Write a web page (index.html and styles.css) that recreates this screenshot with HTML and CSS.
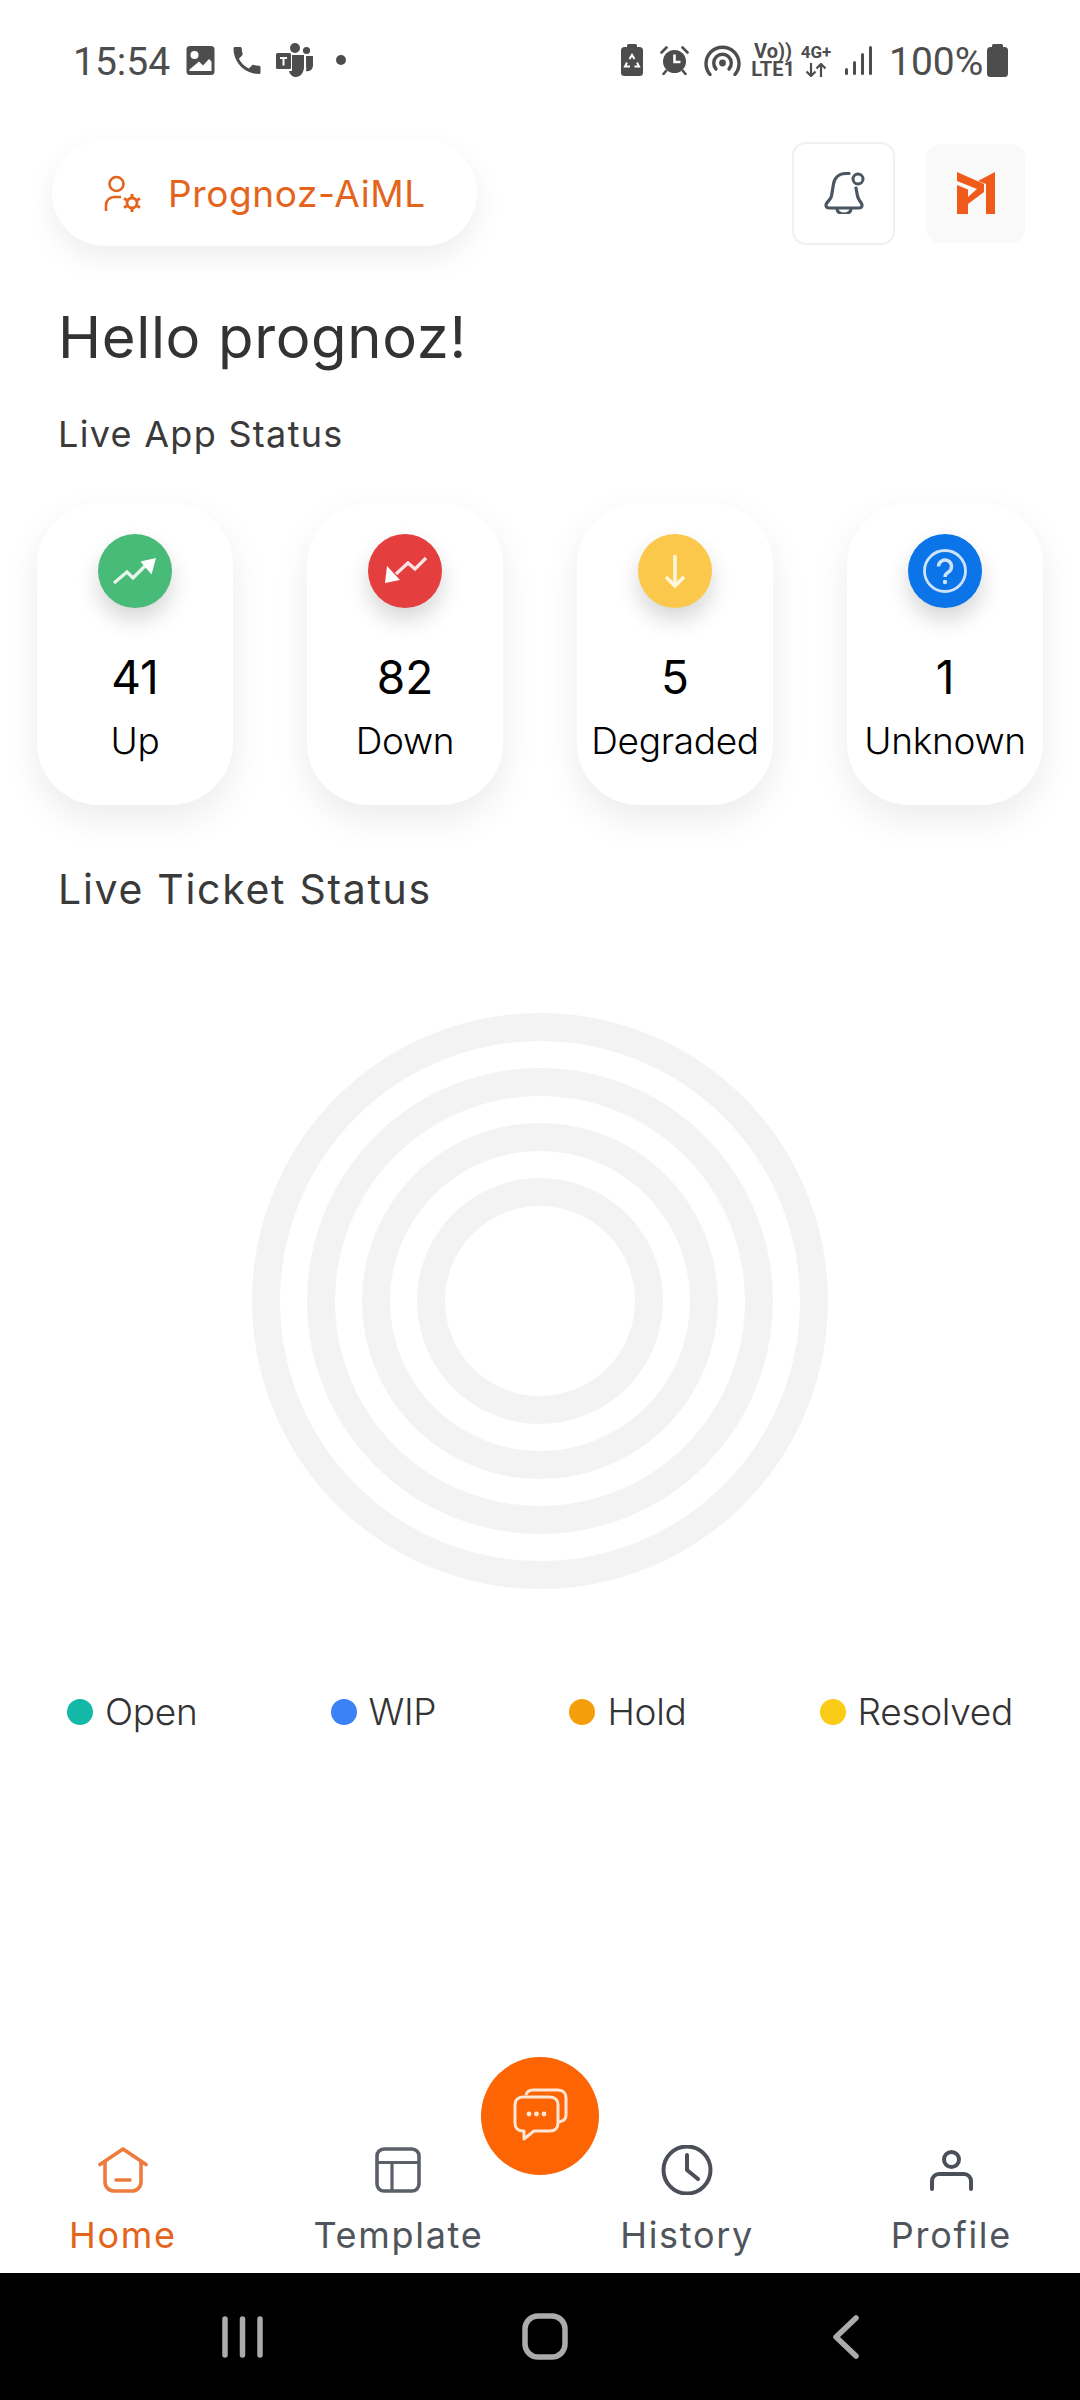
FILE: index.html
```html
<!DOCTYPE html>
<html lang="en">
  <head>
    <meta charset="UTF-8" />
    <meta name="viewport" content="width=device-width, initial-scale=1.0" />
    <title>Prognoz-AiML</title>
    <link rel="stylesheet" href="styles.css">
  </head>
  <body>
    <div class="app">
      <!-- Android status bar -->
      <div class="status">
        <div class="status-group">
          <span class="status-time">15:54</span>
          <svg class="ic-image" width="29" height="29" viewBox="0 0 29 29">
            <rect x="0.5" y="0" width="28" height="29" rx="3.5" fill="#4d4d4d" />
            <circle cx="8.5" cy="9" r="4" fill="#fff" />
            <path d="M3.5 25V23.5L13 15.5L17 19.5L23 13L25.5 15.5V25Z" fill="#fff" />
          </svg>
          <svg class="ic-phone" width="28" height="27" viewBox="3 3 18 18">
            <path fill="#4d4d4d" d="M20 15.5c-1.25 0-2.45-.2-3.57-.57-.35-.11-.74-.03-1.02.24l-2.2 2.2c-2.83-1.44-5.15-3.75-6.59-6.59l2.2-2.21c.28-.26.36-.65.25-1-.37-1.12-.57-2.32-.57-3.57 0-.55-.45-1-1-1H4c-.55 0-1 .45-1 1 0 9.39 7.61 17 17 17 .55 0 1-.45 1-1v-3.5c0-.55-.45-1-1-1z" />
          </svg>
          <svg class="ic-teams" width="38" height="34" viewBox="0 0 38 34">
            <circle cx="20" cy="5" r="5" fill="#4d4d4d" />
            <circle cx="31.5" cy="7.5" r="3.6" fill="#4d4d4d" />
            <path d="M17 12H29V24C29 30 25 34 21 34C18 34 15 32 14 28H17Z" fill="#4d4d4d" />
            <path d="M31 13H38V22C38 26 35 29 31 28C31.5 26 31 24 31 22Z" fill="#4d4d4d" />
            <rect x="1" y="10" width="15" height="16" rx="1.5" fill="#4d4d4d" />
            <path d="M5 14H12V16H9.5V22.5H7.5V16H5Z" fill="#fff" />
          </svg>
          <span class="status-dot"></span>
        </div>
        <div class="status-group">
          <svg class="ic-recycle" width="22" height="32" viewBox="0 0 22 32">
            <rect x="6" y="0" width="10" height="6" rx="1.5" fill="#4d4d4d" />
            <rect x="0" y="3" width="22" height="29" rx="3.5" fill="#4d4d4d" />
            <path d="M8.5 15L11 11L13.5 15M16 18.5L18 22.5H13.5M9 22.5H4L6 18.5" fill="none" stroke="#fff" stroke-width="2" />
          </svg>
          <svg class="ic-alarm" width="29" height="29" viewBox="0 0 29 29">
            <circle cx="14.5" cy="15.5" r="11.5" fill="#4d4d4d" />
            <path d="M14.5 8.5V16H20.5" fill="none" stroke="#fff" stroke-width="2.6" />
            <path d="M1.5 6.5L6.5 1.5M22.5 1.5L27.5 6.5M6 25L3.5 28M23 25L25.5 28" fill="none" stroke="#4d4d4d" stroke-width="2.6" stroke-linecap="round" />
          </svg>
          <svg class="ic-hotspot" width="37" height="31" viewBox="0 0 37 31">
            <path d="M6 29.5A16.5 16.5 0 1 1 31 29.5" fill="none" stroke="#4d4d4d" stroke-width="3.4" stroke-linecap="round" />
            <path d="M12 24A8.8 8.8 0 1 1 25 24" fill="none" stroke="#4d4d4d" stroke-width="3.4" stroke-linecap="round" />
            <circle cx="18.5" cy="18" r="3.4" fill="#4d4d4d" />
          </svg>
          <div class="ic-volte">
            <span>Vo))</span>
            <span>LTE1</span>
          </div>
          <div class="ic-net">
            <span>4G+</span>
            <svg width="22" height="14" viewBox="0 0 22 14">
              <path d="M6 0V13M1.5 8.5L6 13L10.5 8.5M16 14V1M11.5 5.5L16 1L20.5 5.5" fill="none" stroke="#4d4d4d" stroke-width="2.2" />
            </svg>
          </div>
          <svg class="ic-signal" width="27" height="29" viewBox="0 0 27 29">
            <rect x="0" y="22" width="3" height="7" rx="1.5" fill="#4d4d4d" />
            <rect x="8" y="15" width="3" height="14" rx="1.5" fill="#4d4d4d" />
            <rect x="16" y="7" width="3" height="22" rx="1.5" fill="#4d4d4d" />
            <rect x="24" y="0" width="3" height="29" rx="1.5" fill="#4d4d4d" />
          </svg>
          <span class="status-battery">100%</span>
          <svg class="ic-battery" width="21" height="33" viewBox="0 0 21 33">
            <rect x="5" y="0" width="11" height="6" rx="1.5" fill="#4d4d4d" />
            <rect x="0" y="3" width="21" height="30" rx="3.5" fill="#4d4d4d" />
          </svg>
        </div>
      </div>

      <div class="topbar">
        <div class="org-pill">
          <svg width="38" height="37" viewBox="0 0 38 37">
            <circle cx="12.5" cy="9" r="7" fill="none" stroke="#e4641c" stroke-width="2.6" />
            <path d="M2 36V30A8 8 0 0 1 10 22H17" fill="none" stroke="#e4641c" stroke-width="2.6" />
            <circle cx="28" cy="28" r="5" fill="none" stroke="#e4641c" stroke-width="2.8" />
            <path d="M28 19V22M28 34V37M20 23.5L22.8 25M33.2 31L36 32.5M20 32.5L22.8 31M33.2 25L36 23.5" fill="none" stroke="#e4641c" stroke-width="3" />
          </svg>
          <span>Prognoz-AiML</span>
        </div>
        <div class="top-actions">
          <div class="bell-box">
            <svg width="42" height="42" viewBox="0 0 42 42">
              <path d="M26 1.5H23C16 1.5 11.5 6 10.5 12L8.5 24C8 27 5 29 3.5 31.5C2.5 33.5 3 36 6 36H36C39 36 39.5 33.5 38.5 31.5C37 29 35 27 34.5 24L33 16" fill="none" stroke="#4b5563" stroke-width="3.2" stroke-linecap="round" />
              <path d="M14 37A7 5 0 0 0 28 37" fill="none" stroke="#4b5563" stroke-width="3.2" />
              <circle cx="35" cy="7" r="5" fill="none" stroke="#4b5563" stroke-width="3" />
            </svg>
          </div>
          <div class="logo-box">
            <svg width="38" height="42" viewBox="0 0 38 42">
              <path d="M0 0L27 12V20L11 32V25L20 17L0 9Z" fill="#f05a1a" />
              <path d="M0 13L11 17.5V42H0Z" fill="#f05a1a" />
              <path d="M38 0V42H29V12L21 9Z" fill="#f05a1a" />
            </svg>
          </div>
        </div>
      </div>

      <h1 class="hello">Hello prognoz!</h1>
      <h2 class="sub-title">Live App Status</h2>

      <div class="cards">
        <div class="card">
          <div class="circle green">
            <svg width="74" height="74" viewBox="-37 -37 74 74">
              <path d="M-21 12L-8 1L-2 7L10 -5" fill="none" stroke="#e6f6ec" stroke-width="3.2" />
              <path d="M21 -13L5.5 -9.5L16.5 3.5Z" fill="#fff" />
            </svg>
          </div>
          <div class="num">41</div>
          <div class="lbl">Up</div>
        </div>
        <div class="card">
          <div class="circle red">
            <svg width="74" height="74" viewBox="-37 -37 74 74">
              <path d="M21 -13L10 -2L3 -8L-9 3" fill="none" stroke="#fde4e4" stroke-width="3.2" />
              <path d="M-20 12L-18 -5L-5 9Z" fill="#fff" />
            </svg>
          </div>
          <div class="num">82</div>
          <div class="lbl">Down</div>
        </div>
        <div class="card">
          <div class="circle yellow">
            <svg width="74" height="74" viewBox="-37 -37 74 74">
              <path d="M0 -16V15M-9 6L0 15L9 6" fill="none" stroke="#fff6dc" stroke-width="3.6" />
            </svg>
          </div>
          <div class="num">5</div>
          <div class="lbl">Degraded</div>
        </div>
        <div class="card">
          <div class="circle blue">
            <svg width="74" height="74" viewBox="-37 -37 74 74">
              <circle r="20.5" fill="none" stroke="#cfe2fb" stroke-width="2.8" />
              <path d="M-6.5 -4.5A6.5 6.5 0 1 1 3.5 1C1 2.5 0 3.5 0 6" fill="none" stroke="#cfe2fb" stroke-width="3.4" />
              <circle cx="0" cy="11" r="2.2" fill="#cfe2fb" />
            </svg>
          </div>
          <div class="num">1</div>
          <div class="lbl">Unknown</div>
        </div>
      </div>

      <h2 class="ticket-title">Live Ticket Status</h2>

      <!-- empty radial chart tracks -->
      <svg class="rings" width="576" height="576" viewBox="0 0 576 576">
        <circle cx="288" cy="288" r="274" />
        <circle cx="288" cy="288" r="219" />
        <circle cx="288" cy="288" r="164" />
        <circle cx="288" cy="288" r="109" />
      </svg>

      <div class="legend">
        <div class="legend-item"><span class="swatch teal"></span>Open</div>
        <div class="legend-item"><span class="swatch azure"></span>WIP</div>
        <div class="legend-item"><span class="swatch amber"></span>Hold</div>
        <div class="legend-item"><span class="swatch gold"></span>Resolved</div>
      </div>

      <div class="nav">
        <div class="nav-item active">
          <div class="nav-icon">
            <svg width="50" height="46" viewBox="0 0 50 46">
              <path d="M2 17.5L25 2L48 17.5M7 14V35A9 9 0 0 0 16 44H34A9 9 0 0 0 43 35V14M18 33H32" fill="none" stroke="#ee7b3e" stroke-width="3.6" stroke-linecap="round" stroke-linejoin="round" />
            </svg>
          </div>
          <span>Home</span>
        </div>
        <div class="nav-item">
          <div class="nav-icon">
            <svg width="46" height="46" viewBox="0 0 46 46">
              <rect x="2" y="2" width="42" height="42" rx="7" fill="none" stroke="#5b6068" stroke-width="3.6" />
              <path d="M2 15.5H44M17 15.5V44" fill="none" stroke="#5b6068" stroke-width="3.2" />
            </svg>
          </div>
          <span>Template</span>
        </div>
        <div class="nav-item">
          <div class="nav-icon">
            <svg width="52" height="50" viewBox="0 0 52 50">
              <circle cx="26" cy="25" r="23.5" fill="none" stroke="#4b4f57" stroke-width="4" />
              <path d="M26 10V25L37 34" fill="none" stroke="#4b4f57" stroke-width="4" stroke-linecap="round" stroke-linejoin="round" />
            </svg>
          </div>
          <span>History</span>
        </div>
        <div class="nav-item">
          <div class="nav-icon">
            <svg width="43" height="41" viewBox="0 0 43 41">
              <circle cx="21.5" cy="9.5" r="7.5" fill="none" stroke="#4b4f57" stroke-width="4" />
              <path d="M2 39V31A7 7 0 0 1 9 24H34A7 7 0 0 1 41 31V39" fill="none" stroke="#4b4f57" stroke-width="4" stroke-linecap="round" />
            </svg>
          </div>
          <span>Profile</span>
        </div>
        <div class="fab">
          <svg width="100" height="100" viewBox="0 -2 100 100">
            <path d="M36 27C37 23 39 22 43 22H68C73 22 76 25 76 30V47C76 51 74 53 69 54" fill="none" stroke="#ffe6d6" stroke-width="3" />
            <path d="M33 29H60C65 29 68 32 68 37V55C68 60 65 63 60 63H44L34 71V63H33C28 63 25 60 25 55V37C25 32 28 29 33 29Z" fill="#fc6404" stroke="#ffe6d6" stroke-width="3" stroke-linejoin="round" />
            <circle cx="39" cy="46" r="2.4" fill="#ffe6d6" />
            <circle cx="46.5" cy="46" r="2.4" fill="#ffe6d6" />
            <circle cx="54" cy="46" r="2.4" fill="#ffe6d6" />
          </svg>
        </div>
      </div>

      <!-- Android navigation bar -->
      <div class="sys-nav">
        <svg width="41" height="42" viewBox="0 0 41 42">
          <path d="M3 3V39M20.5 3V39M38 3V39" fill="none" stroke="#ababab" stroke-width="5.5" stroke-linecap="round" />
        </svg>
        <svg class="sys-home" width="46" height="47" viewBox="0 0 46 47">
          <rect x="3" y="3" width="40" height="41" rx="13" fill="none" stroke="#ababab" stroke-width="5.5" />
        </svg>
        <svg class="sys-back" width="26" height="44" viewBox="0 0 26 44">
          <path d="M23 3L3 22L23 41" fill="none" stroke="#ababab" stroke-width="5.5" stroke-linecap="round" stroke-linejoin="round" />
        </svg>
      </div>
    </div>
  </body>
</html>
```

FILE: styles.css
```css
* {
  box-sizing: border-box;
}
body {
  margin: 0;
  background: #fff;
  font-family: "Inter", "Liberation Sans", sans-serif;
  color: #333;
}
svg {
  display: block;
  flex: none;
}
.app {
  width: 1080px;
  height: 2400px;
  display: flex;
  flex-direction: column;
  overflow: hidden;
}

/* status bar */
.status {
  height: 120px;
  padding: 0 72px 0 73px;
  display: flex;
  justify-content: space-between;
  align-items: center;
  font-family: "Roboto", sans-serif;
  color: #4d4d4d;
}
.status-group {
  display: flex;
  align-items: center;
}
.status-time {
  font-size: 39px;
  line-height: 48px;
  padding-top: 3px;
  width: 113px;
}
.ic-phone {
  margin-left: 18px;
}
.ic-teams {
  margin-left: 14px;
}
.status-dot {
  width: 10px;
  height: 10px;
  margin-left: 23px;
  border-radius: 50%;
  background: #4d4d4d;
}
.ic-alarm {
  margin-left: 17px;
}
.ic-hotspot {
  margin-left: 15px;
}
.ic-volte {
  width: 40px;
  margin-left: 12px;
  display: flex;
  flex-direction: column;
  align-items: center;
  font-size: 20px;
  line-height: 18px;
  font-weight: 700;
}
.ic-net {
  width: 32px;
  margin-left: 7px;
  display: flex;
  flex-direction: column;
  align-items: center;
  gap: 2px;
  font-size: 17px;
  line-height: 17px;
  font-weight: 700;
}
.ic-signal {
  margin-left: 13px;
}
.status-battery {
  font-size: 39px;
  line-height: 48px;
  padding-top: 3px;
  margin-left: 17px;
  width: 98px;
}

/* top bar */
.topbar {
  margin-top: 20px;
  padding: 0 55px 0 52px;
  display: flex;
  justify-content: space-between;
  align-items: center;
}
.org-pill {
  width: 425px;
  height: 106px;
  padding-left: 52px;
  border-radius: 53px;
  background: #fff;
  box-shadow: 0 12px 30px rgba(0, 0, 0, 0.07);
  display: flex;
  align-items: center;
  gap: 26px;
  color: #e4641c;
  font-size: 37px;
  letter-spacing: 0.6px;
}
.top-actions {
  display: flex;
  align-items: center;
  gap: 31px;
}
.bell-box {
  width: 103px;
  height: 103px;
  border: 2px solid #f0f0f2;
  border-radius: 14px;
  display: flex;
  align-items: center;
  justify-content: center;
}
.logo-box {
  width: 99px;
  height: 99px;
  background: #f9f9f9;
  border-radius: 14px;
  display: flex;
  align-items: center;
  justify-content: center;
}

/* headings */
.hello {
  margin: 56px 0 0 58px;
  font-size: 58px;
  line-height: 70px;
  font-weight: 400;
  letter-spacing: 0.65px;
  color: #333;
}
.sub-title {
  margin: 40px 0 0 58px;
  font-size: 36px;
  line-height: 44px;
  font-weight: 400;
  letter-spacing: 1.3px;
  color: #3a3a3a;
}
.ticket-title {
  margin: 59px 0 0 58px;
  font-size: 41px;
  line-height: 50px;
  font-weight: 400;
  letter-spacing: 1.7px;
  color: #3a3a3a;
}

/* status cards */
.cards {
  margin-top: 47px;
  padding: 0 37px;
  display: flex;
  justify-content: space-between;
}
.card {
  width: 196px;
  height: 302px;
  padding-top: 31px;
  border-radius: 62px;
  background: #fff;
  box-shadow: 0 14px 36px rgba(0, 0, 0, 0.08);
  display: flex;
  flex-direction: column;
  align-items: center;
  color: #000;
}
.circle {
  width: 74px;
  height: 74px;
  border-radius: 50%;
  box-shadow: 0 12px 22px rgba(0, 0, 0, 0.16);
}
.green {
  background: #48bb78;
}
.red {
  background: #e53e3e;
}
.yellow {
  background: #fbc84b;
}
.blue {
  background: #0a74e8;
}
.num {
  margin-top: 41px;
  font-size: 46px;
  line-height: 56px;
}
.lbl {
  margin-top: 14px;
  font-size: 37px;
  line-height: 44px;
  font-weight: 300;
  letter-spacing: -0.3px;
  white-space: nowrap;
}

/* chart */
.rings {
  margin: 99px auto 0;
}
.rings circle {
  fill: none;
  stroke: #f3f3f3;
  stroke-width: 28;
}
.legend {
  margin-top: 101px;
  padding: 0 67px;
  display: flex;
  justify-content: space-between;
}
.legend-item {
  display: flex;
  align-items: center;
  gap: 12px;
  font-size: 37px;
  line-height: 44px;
  font-weight: 300;
  letter-spacing: -0.3px;
  color: #333;
}
.swatch {
  width: 26px;
  height: 26px;
  border-radius: 50%;
}
.teal {
  background: #14b8a6;
}
.azure {
  background: #3b82f6;
}
.amber {
  background: #f59e0b;
}
.gold {
  background: #facc15;
}

/* bottom nav */
.nav {
  position: relative;
  margin-top: auto;
  padding: 0 68px 16px 69px;
  display: flex;
  justify-content: space-between;
}
.nav-item {
  display: flex;
  flex-direction: column;
  align-items: center;
  color: #50555c;
  font-size: 36px;
  line-height: 44px;
  letter-spacing: 1.7px;
}
.nav-item.active {
  color: #e4641c;
}
.nav-icon {
  height: 50px;
  margin-bottom: 18px;
  display: flex;
  align-items: center;
}
.fab {
  position: absolute;
  left: 481px;
  bottom: 98px;
  width: 118px;
  height: 118px;
  border-radius: 50%;
  background: #fc6404;
  display: flex;
  align-items: center;
  justify-content: center;
}
.sys-nav {
  height: 127px;
  padding-left: 222px;
  background: #000;
  display: flex;
  align-items: center;
}
.sys-home {
  margin-left: 259px;
}
.sys-back {
  margin-left: 265px;
}
```
